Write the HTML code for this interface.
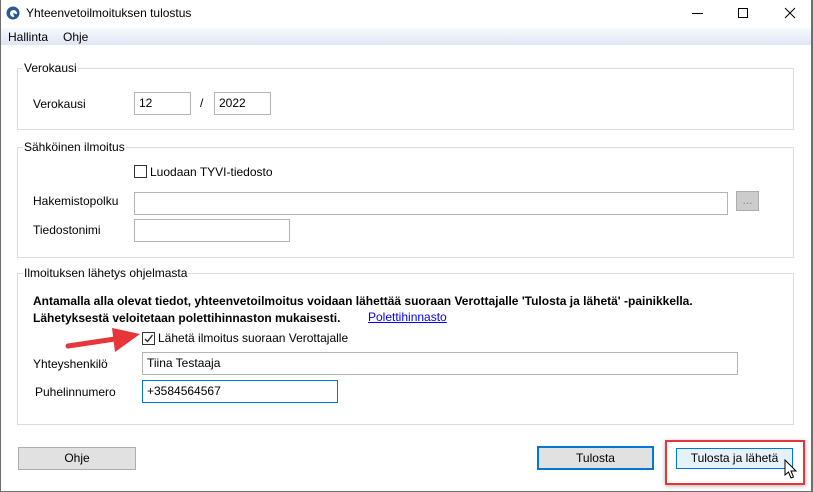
<!DOCTYPE html>
<html><head><meta charset="utf-8"><style>
*{box-sizing:border-box;margin:0;padding:0}
body{width:813px;height:492px;background:#fff;font-family:"Liberation Sans",sans-serif;font-size:12px;color:#000;position:relative;overflow:hidden}
.a{position:absolute}
.win{left:0;top:0;width:813px;height:492px;border-left:1px solid #6d6d6d;border-right:2px solid #6d6d6d;border-bottom:1px solid #6d6d6d}
.menu{left:1px;top:28px;width:810px;height:17px;background:linear-gradient(#f7f9fd,#dfe6f3)}
.grp{border:1px solid #dcdcdc}
.leg{background:#fff;padding:0 1px}
.inp{border:1px solid #b4b4b4;background:#fff;padding:3px 4px;height:23px}
.cb{width:13px;height:13px;border:1px solid #333;background:#fff}
.btn{border:1px solid #adadad;background:#e1e1e1;text-align:center;line-height:20px}
</style></head><body>
<div class="a win"></div>
<svg class="a" style="left:6px;top:6px" width="14" height="14" viewBox="0 0 14 14"><circle cx="7" cy="7" r="6.5" fill="#2a5b8c"/><circle cx="7.5" cy="7.5" r="3.5" fill="#fff"/><path d="M7 7 L13 9 L9 13Z" fill="#2a5b8c"/></svg>
<div class="a" style="left:26px;top:6px">Yhteenvetoilmoituksen tulostus</div>
<div class="a" style="left:692px;top:13px;width:11px;height:1px;background:#000"></div>
<div class="a" style="left:738px;top:8px;width:10px;height:10px;border:1px solid #000"></div>
<svg class="a" style="left:784px;top:7px" width="12" height="12"><path d="M1 1L11 11M11 1L1 11" stroke="#000" stroke-width="1"/></svg>
<div class="a menu"></div>
<div class="a" style="left:8px;top:30px">Hallinta</div>
<div class="a" style="left:63px;top:30px">Ohje</div>

<div class="a grp" style="left:17px;top:68px;width:777px;height:62px"></div>
<div class="a leg" style="left:23px;top:61px">Verokausi</div>
<div class="a" style="left:33px;top:97px">Verokausi</div>
<div class="a inp" style="left:134px;top:92px;width:57px">12</div>
<div class="a" style="left:200px;top:96px">/</div>
<div class="a inp" style="left:214px;top:92px;width:57px">2022</div>

<div class="a grp" style="left:17px;top:147px;width:777px;height:111px"></div>
<div class="a leg" style="left:23px;top:140px">Sähköinen ilmoitus</div>
<div class="a cb" style="left:134px;top:165px"></div>
<div class="a" style="left:150px;top:165px">Luodaan TYVI-tiedosto</div>
<div class="a" style="left:33px;top:194px">Hakemistopolku</div>
<div class="a inp" style="left:134px;top:192px;width:594px"></div>
<div class="a btn" style="left:736px;top:191px;width:23px;height:20px;background:#ccc;color:#888;line-height:16px">...</div>
<div class="a" style="left:33px;top:223px">Tiedostonimi</div>
<div class="a inp" style="left:134px;top:219px;width:156px"></div>

<div class="a grp" style="left:17px;top:273px;width:777px;height:152px"></div>
<div class="a leg" style="left:23px;top:266px">Ilmoituksen lähetys ohjelmasta</div>
<div class="a" style="left:33px;top:294px;font-weight:bold;font-size:12px">Antamalla alla olevat tiedot, yhteenvetoilmoitus voidaan lähettää suoraan Verottajalle 'Tulosta ja lähetä' -painikkella.</div>
<div class="a" style="left:33px;top:311px;font-weight:bold;font-size:12px">Lähetyksestä veloitetaan polettihinnaston mukaisesti.</div>
<div class="a" style="left:368px;top:310px;color:#00f;text-decoration:underline">Polettihinnasto</div>
<div class="a cb" style="left:142px;top:332px"></div>
<svg class="a" style="left:143px;top:333px" width="11" height="11"><path d="M2 6L4.5 8.5L9.5 2" stroke="#222" stroke-width="1.3" fill="none"/></svg>
<div class="a" style="left:158px;top:331px">Lähetä ilmoitus suoraan Verottajalle</div>
<div class="a" style="left:33px;top:357px">Yhteyshenkilö</div>
<div class="a inp" style="left:142px;top:352px;width:596px">Tiina Testaaja</div>
<div class="a" style="left:35px;top:385px">Puhelinnumero</div>
<div class="a inp" style="left:142px;top:380px;width:196px;border-color:#0078d7">+3584564567</div>
<svg class="a" style="left:60px;top:322px" width="85" height="40"><path d="M8 24L55 17" stroke="#e8353a" stroke-width="5" stroke-linecap="round"/><path d="M52 6L80 12L55 30Z" fill="#e8353a"/></svg>

<div class="a btn" style="left:18px;top:447px;width:118px;height:23px">Ohje</div>
<div class="a btn" style="left:537px;top:446px;width:117px;height:24px;border:2px solid #0078d7">Tulosta</div>
<div class="a" style="left:665px;top:440px;width:140px;height:45px;border:2px solid #e8353a;box-shadow:0 1px 4px rgba(0,0,0,.3)"></div>
<div class="a btn" style="left:676px;top:448px;width:117px;height:21px;background:#e5f1fb;border-color:#0078d7;line-height:19px">Tulosta ja lähetä</div>
<svg class="a" style="left:784px;top:459px" width="14" height="22"><path d="M1 1L1 16L4.5 13L7 19L9.5 18L7 12L12 12Z" fill="#fff" stroke="#000" stroke-width="1"/></svg>
</body></html>
